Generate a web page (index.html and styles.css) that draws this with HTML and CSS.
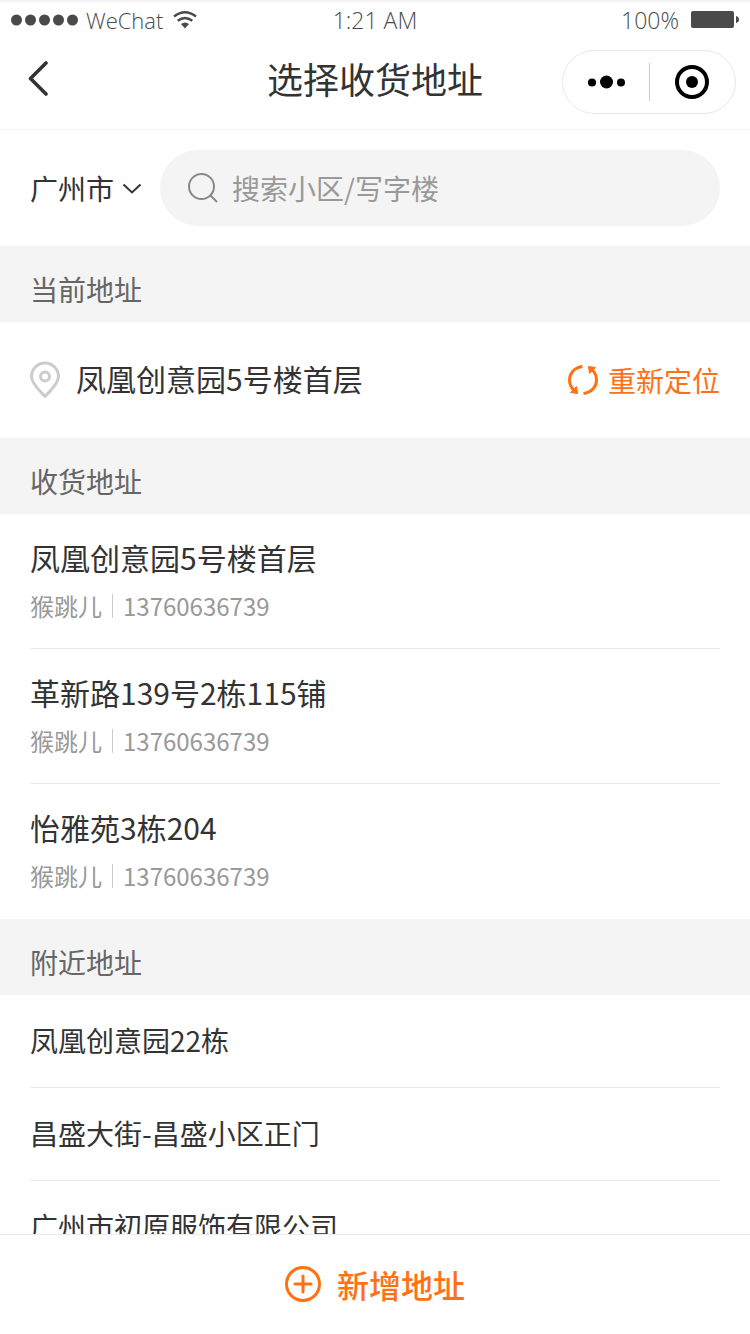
FILE: index.html
```html
<!DOCTYPE html>
<html lang="zh-CN">
<head>
    <meta charset="UTF-8">
    <meta name="viewport" content="width=device-width, initial-scale=1.0">
    <link rel="stylesheet" href="styles.css">
    <title>选择收货地址</title>
</head>
<body>
    <div class="status">
        <div class="status-left">
            <svg class="signal" width="68" height="12" viewBox="0 0 68 12">
                <circle cx="5.500" cy="6" r="5.500"/>
                <circle cx="19.500" cy="6" r="5.500"/>
                <circle cx="33.500" cy="6" r="5.500"/>
                <circle cx="47.500" cy="6" r="5.500"/>
                <circle cx="61.500" cy="6" r="5.500"/>
            </svg>
            <span class="carrier">WeChat</span>
            <svg class="wifi" width="24" height="18" viewBox="0 0 24 18">
                <path d="M1 5.500Q12-3 23 5.500" fill="none" stroke="#4a4a4a" stroke-width="2.400"/>
                <path d="M4.700 9.800Q12 4.200 19.300 9.800" fill="none" stroke="#4a4a4a" stroke-width="2.400"/>
                <path d="M8 13Q12 10 16 13L12 17.500Z" fill="#4a4a4a"/>
            </svg>
        </div>
        <span>1:21 AM</span>
        <div class="status-right">
            <span>100%</span>
            <svg width="48" height="18" viewBox="0 0 48 18">
                <rect width="43" height="17" rx="2" fill="#4a4a4a"/>
                <path d="M45 5Q48 6 48 8.500T45 12Z" fill="#4a4a4a"/>
            </svg>
        </div>
    </div>

    <header class="header">
        <button class="back" aria-label="返回">
            <svg width="20" height="36" viewBox="0 0 20 36">
                <path d="M18 3L2.500 18.500L18 34" fill="none" stroke="#333" stroke-width="3.600" stroke-linecap="round" stroke-linejoin="round"/>
            </svg>
        </button>
        <h1>选择收货地址</h1>
        <div class="capsule">
            <button aria-label="更多">
                <svg width="38" height="14" viewBox="0 0 38 14">
                    <circle cx="5" cy="7.500" r="4"/>
                    <circle cx="19.500" cy="7" r="6.500"/>
                    <circle cx="34" cy="7.500" r="4"/>
                </svg>
            </button>
            <button aria-label="关闭">
                <svg width="34" height="34" viewBox="0 0 34 34">
                    <circle cx="17" cy="17" r="15" fill="none" stroke="#000" stroke-width="4"/>
                    <circle cx="17" cy="17" r="6"/>
                </svg>
            </button>
        </div>
    </header>

    <form class="search">
        <div class="city">
            <select aria-label="城市">
                <option>广州市</option>
            </select>
            <svg width="20" height="12" viewBox="0 0 20 12">
                <path d="M1.500 2.500L10 10.500L18.500 2.500" fill="none" stroke="#333" stroke-width="2"/>
            </svg>
        </div>
        <label class="search-box">
            <svg width="30" height="30" viewBox="0 0 30 30">
                <circle cx="13.500" cy="13.500" r="12.500" fill="none" stroke="#888" stroke-width="2"/>
                <path d="M22 22L29 29" stroke="#888" stroke-width="2"/>
            </svg>
            <input type="text" aria-label="搜索" placeholder="搜索小区/写字楼">
        </label>
    </form>

    <main class="content">
        <h2>当前地址</h2>
        <div class="current">
            <svg width="30" height="38" viewBox="0 0 30 38">
                <path d="M15 35.500C11 31 1.500 23 1.500 15.500a13.500 13.500 0 0 1 27 0C28.500 23 19 31 15 35.500Z" fill="none" stroke="#ccc" stroke-width="3" stroke-linejoin="round"/>
                <circle cx="15" cy="15.500" r="4.500" fill="none" stroke="#ccc" stroke-width="3"/>
            </svg>
            <span class="place">凤凰创意园5号楼首层</span>
            <button class="locate">
                <svg width="30" height="30" viewBox="0 0 30 30">
                    <path d="M14.500 1.500C6 2.500 1.500 8.500 1.500 15C1.500 19.500 3.500 23 6 25.500" fill="none" stroke="#ff7112" stroke-width="3"/>
                    <path d="M15.500 28.500C24 27.500 28.500 21.500 28.500 15C28.500 10.500 26.500 7 24 4.500" fill="none" stroke="#ff7112" stroke-width="3"/>
                    <path d="M2.500 27.500L9.500 28.500L8.500 21.500Z" fill="#ff7112" stroke="#ff7112" stroke-linejoin="round"/>
                    <path d="M27.500 2.500L20.500 1.500L21.500 8.500Z" fill="#ff7112" stroke="#ff7112" stroke-linejoin="round"/>
                </svg>
                重新定位
            </button>
        </div>

        <h2>收货地址</h2>
        <ul class="saved">
            <li>
                <div class="place">凤凰创意园5号楼首层</div>
                <div class="contact"><span>猴跳儿</span><span>13760636739</span></div>
            </li>
            <li>
                <div class="place">革新路139号2栋115铺</div>
                <div class="contact"><span>猴跳儿</span><span>13760636739</span></div>
            </li>
            <li>
                <div class="place">怡雅苑3栋204</div>
                <div class="contact"><span>猴跳儿</span><span>13760636739</span></div>
            </li>
        </ul>

        <h2>附近地址</h2>
        <ul class="nearby">
            <li>凤凰创意园22栋</li>
            <li>昌盛大街-昌盛小区正门</li>
            <li>广州市初原服饰有限公司</li>
        </ul>
    </main>

    <footer class="footer">
        <button class="add">
            <svg width="36" height="36" viewBox="0 0 36 36">
                <circle cx="18" cy="18" r="16.500" fill="none" stroke="#ff7112" stroke-width="3"/>
                <path d="M10 18H26M18 10V26" stroke="#ff7112" stroke-width="3" stroke-linecap="round"/>
            </svg>
            新增地址
        </button>
    </footer>
</body>
</html>
```

FILE: styles.css
```css
* {
    box-sizing: border-box;
}
body {
    display: flex;
    flex-direction: column;
    height: 100vh;
    margin: 0;
    background: #fff;
    color: #333;
    font-family: "Noto Sans CJK SC", sans-serif;
    font-size: 28px;
}
h1, h2, ul {
    margin: 0;
    padding: 0;
    font-weight: normal;
    list-style: none;
}
svg {
    display: block;
    flex: none;
}
button {
    display: flex;
    align-items: center;
    padding: 0;
    border: none;
    background: none;
    color: inherit;
    font: inherit;
    cursor: pointer;
}

/* status bar */
.status {
    display: grid;
    grid-template-columns: 1fr auto 1fr;
    flex: none;
    height: 40px;
    padding: 0 11px 2px;
    border-top: 2px solid #f3f3f3;
    align-items: center;
    color: #4a4a4a;
    font-family: "Open Sans", sans-serif;
    font-size: 23px;
    font-weight: 300;
    line-height: 34px;
}
.status-left, .status-right {
    display: flex;
    align-items: center;
}
.status-right {
    justify-content: flex-end;
    gap: 12px;
}
.signal {
    margin-right: 7px;
    fill: #4a4a4a;
}
.carrier {
    font-size: 22px;
}
.wifi {
    margin-left: 10px;
}

/* title bar */
.header {
    display: grid;
    grid-template-columns: 1fr auto 1fr;
    flex: none;
    align-items: center;
    height: 90px;
    padding: 0 14px 6px;
    border-bottom: 1px solid #f3f3f3;
}
.back {
    padding: 0 14px 8px;
}
.header h1 {
    padding-bottom: 8px;
    font-size: 36px;
    line-height: 54px;
}
.capsule {
    display: flex;
    justify-self: end;
    width: 174px;
    height: 64px;
    border: 1px solid #e8e8e8;
    border-radius: 32px;
}
.capsule button {
    flex: 1;
    justify-content: center;
    margin: 12px 0;
}
.capsule button + button {
    border-left: 1px solid #ccc;
}

/* city and search */
.search {
    display: flex;
    flex: none;
    align-items: center;
    gap: 18px;
    margin: 0;
    padding: 20px 30px;
}
.city {
    display: flex;
    align-items: center;
    gap: 7px;
}
.city select {
    padding: 0;
    border: none;
    background: none;
    color: inherit;
    font: inherit;
    -webkit-appearance: none;
    appearance: none;
}
.search-box {
    display: flex;
    flex: 1;
    align-items: center;
    gap: 14px;
    height: 76px;
    padding: 0 28px;
    border-radius: 38px;
    background: #f4f4f4;
}
.search-box input {
    flex: 1;
    min-width: 0;
    padding: 0;
    border: none;
    outline: none;
    background: none;
    color: inherit;
    font: inherit;
}
.search-box input::placeholder {
    color: #999;
}

/* address lists */
.content {
    flex: 1;
    min-height: 0;
    overflow-y: auto;
    scrollbar-width: none;
}
.content h2 {
    padding: 23px 30px 13px;
    background: #f4f4f4;
    color: #666;
    font-size: 28px;
    line-height: 40px;
}
.current {
    display: flex;
    align-items: center;
    gap: 16px;
    height: 116px;
    padding: 0 30px;
}
.place {
    padding-bottom: 4px;
    font-size: 30px;
    line-height: 40px;
}
.locate {
    gap: 10px;
    margin-left: auto;
    color: #ff7112;
}
.saved, .nearby {
    padding: 0 30px;
}
.saved li {
    height: 135px;
    padding-top: 23px;
    border-bottom: 1px solid #ebebeb;
}
.saved li:last-child {
    border-bottom: none;
}
.contact {
    display: flex;
    align-items: center;
    margin-top: 7px;
    color: #999;
    font-size: 24px;
    line-height: 36px;
}
.contact span + span {
    margin-left: 10px;
    padding-left: 10px;
    border-left: 1px solid #ccc;
    line-height: 24px;
}
.nearby li {
    height: 93px;
    border-bottom: 1px solid #ebebeb;
    line-height: 90px;
}

/* bottom bar */
.footer {
    display: flex;
    flex: none;
    justify-content: center;
    height: 100px;
    padding-bottom: 2px;
    border-top: 1px solid #ebebeb;
}
.add {
    gap: 16px;
    color: #ff7112;
    font-size: 32px;
    font-weight: 500;
}
```
